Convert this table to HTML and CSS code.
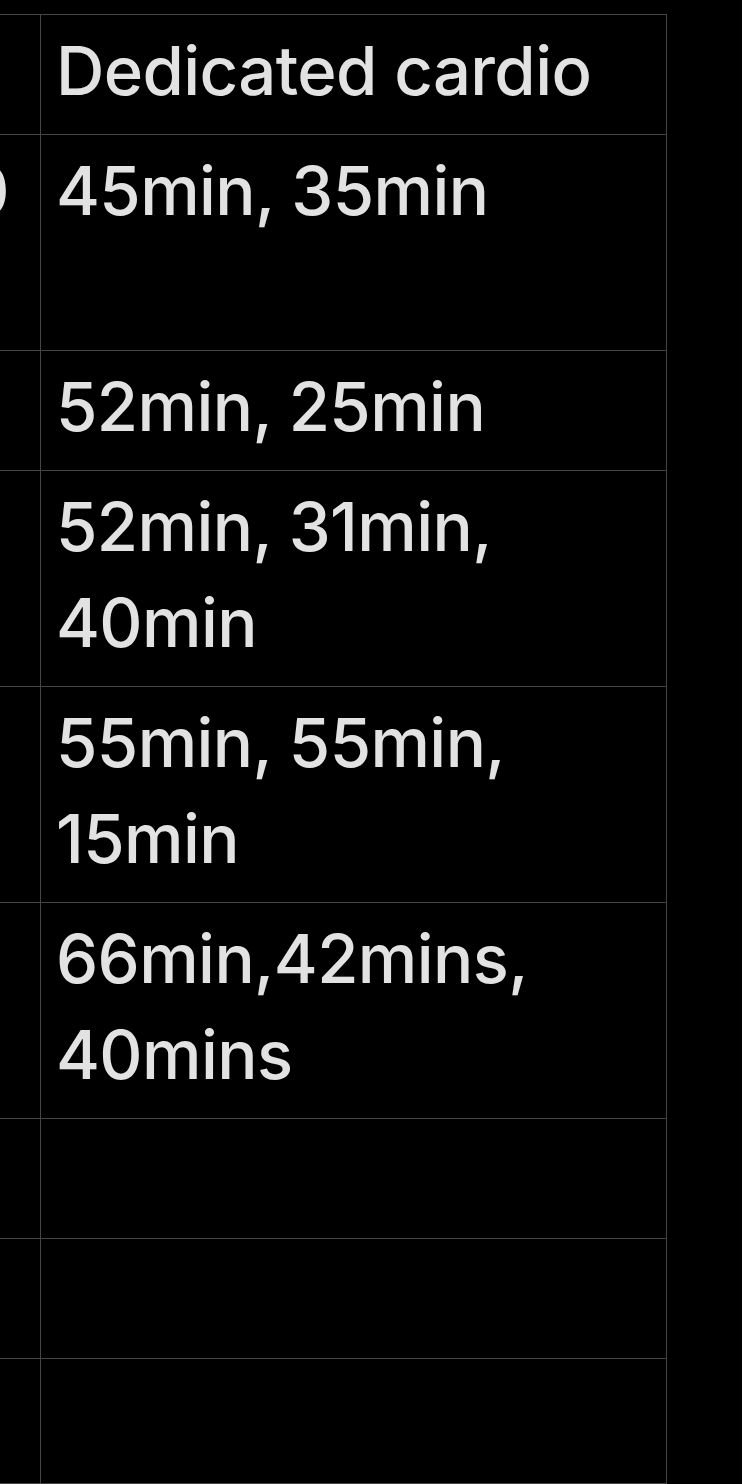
FILE: index.html
```html
<!DOCTYPE html>
<html lang="en">
<head>
    <meta charset="UTF-8">
    <meta name="viewport" content="width=device-width, initial-scale=1.0">
    <title>Training log</title>
    <link rel="stylesheet" href="styles.css">
</head>
<body>
    <div class="table-scroll">
        <table class="log">
            <colgroup>
                <col class="col-day">
                <col class="col-cardio">
            </colgroup>
            <tr>
                <td class="day">&nbsp;</td>
                <td>Dedicated cardio</td>
            </tr>
            <tr>
                <td class="day">40<br>&nbsp;</td>
                <td>45min, 35min</td>
            </tr>
            <tr>
                <td class="day">&nbsp;</td>
                <td>52min, 25min</td>
            </tr>
            <tr>
                <td class="day">&nbsp;</td>
                <td>52min, 31min, 40min</td>
            </tr>
            <tr>
                <td class="day">&nbsp;</td>
                <td>55min, 55min, 15min</td>
            </tr>
            <tr>
                <td class="day">&nbsp;</td>
                <td>66min,42mins, 40mins</td>
            </tr>
            <tr>
                <td class="day">&nbsp;</td>
                <td>&nbsp;</td>
            </tr>
            <tr>
                <td class="day">&nbsp;</td>
                <td>&nbsp;</td>
            </tr>
            <tr class="last">
                <td class="day">&nbsp;</td>
                <td>&nbsp;</td>
            </tr>
        </table>
    </div>
</body>
</html>
```

FILE: styles.css
```css
html, body {
    margin: 0;
    padding: 0;
    background-color: #000;
    overflow: hidden;
}

body {
    font-family: Inter, "Noto Sans", sans-serif;
    color: #e2e2e2;
}

.table-scroll {
    padding-top: 14px;
    margin-left: -260px;
}

.log {
    border-collapse: collapse;
    table-layout: fixed;
    width: 926px;
    font-size: 67px;
    font-weight: 500;
    letter-spacing: -0.6px;
    line-height: 96px;
}

.col-day {
    width: 300px;
}

.col-cardio {
    width: 626px;
}

.log td {
    border: 1px solid #454545;
    padding: 8px 16px 15px 15px;
    vertical-align: top;
}

.log td.day {
    text-align: right;
    white-space: nowrap;
    overflow: hidden;
    padding-right: 31px;
}

.log tr.last td {
    padding-bottom: 20px;
}
```
